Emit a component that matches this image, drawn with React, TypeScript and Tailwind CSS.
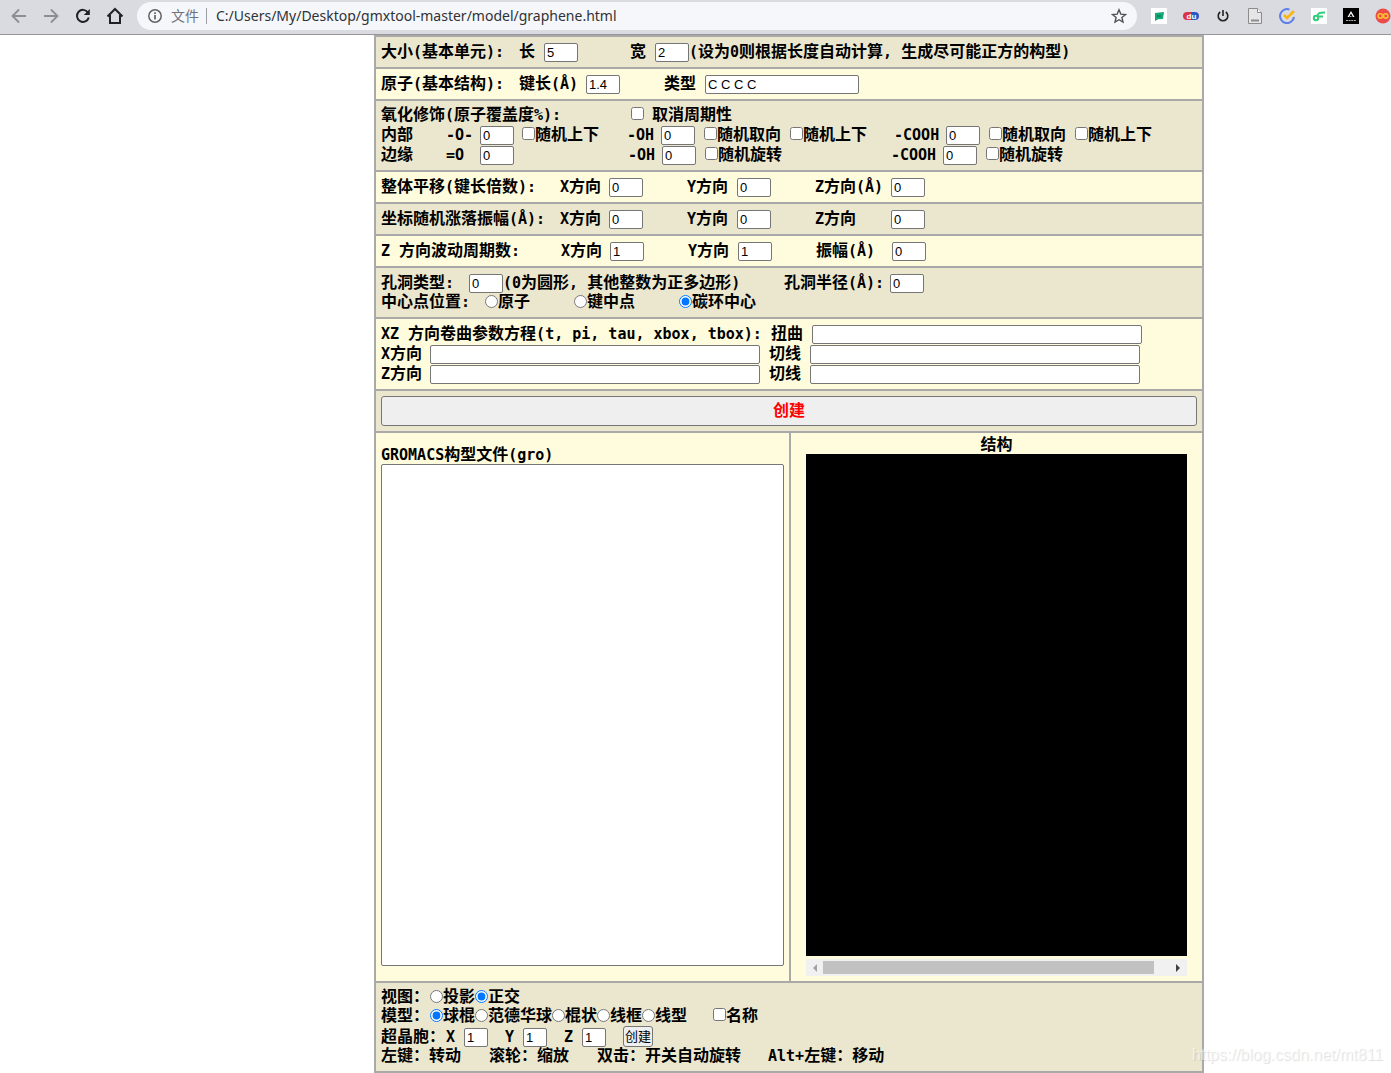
import React from "react";

// latin runs are set a little smaller than the chinese around them
function Txt({ children, className = "" }: { children: string; className?: string }) {
  return (
    <span className={`block whitespace-pre shrink-0 ${className}`}>
      {children.split(/([\x20-\x7eÅ]+)/).map((part, i) =>
        i % 2 ? <span key={i} className="text-[15px] leading-none">{part}</span> : part
      )}
    </span>
  );
}

function Field({ label, value = "", className = "w-[34px]", labelClass = "" }: {
  label: string; value?: string; className?: string; labelClass?: string;
}) {
  return (
    <label className="flex items-end shrink-0">
      <Txt className={labelClass}>{label}</Txt>
      <input
        type="text"
        defaultValue={value}
        className={`h-[19px] shrink-0 border border-[#767676] rounded-[2px] bg-white px-[2px] pb-px text-[13px] leading-4 font-normal font-['Liberation_Sans',sans-serif] ${className}`}
      />
    </label>
  );
}

function Check({ label, className = "", labelClass = "" }: { label: string; className?: string; labelClass?: string }) {
  return (
    <label className={`flex items-center shrink-0 ${className}`}>
      <input type="checkbox" className="w-[13px] h-[13px] mb-[3px]" />
      <Txt className={labelClass}>{label}</Txt>
    </label>
  );
}

function Radio({ name, label, checked = false, className = "" }: {
  name: string; label: string; checked?: boolean; className?: string;
}) {
  return (
    <label className={`flex items-center shrink-0 ${className}`}>
      <input type="radio" name={name} defaultChecked={checked} className="w-[13px] h-[13px] mb-[2px]" />
      <Txt>{label}</Txt>
    </label>
  );
}

function Row({ children, dark = false }: { children: React.ReactNode; dark?: boolean }) {
  return <div className={`p-[5px] ${dark ? "bg-[#ebe7ce]" : "bg-[#fffbdd]"}`}>{children}</div>;
}

function Line({ children, className = "h-5" }: { children: React.ReactNode; className?: string }) {
  return <div className={`flex items-end ${className}`}>{children}</div>;
}

function Toolbar() {
  return (
    <header className="flex items-center h-[35px] pb-[3px] pl-[11px] bg-[#dadbe0] border-b border-[#96969a] overflow-hidden">
      <button aria-label="后退">
        <svg width="16" height="16" viewBox="0 0 16 16" fill="none" stroke="#8d8e92" strokeWidth="1.8">
          <path d="M15 8H2M8 1.500 1.500 8 8 14.500" />
        </svg>
      </button>
      <button aria-label="前进" className="ml-4">
        <svg width="16" height="16" viewBox="0 0 16 16" fill="none" stroke="#8d8e92" strokeWidth="1.8">
          <path d="M1 8h13M8 1.500 14.500 8 8 14.500" />
        </svg>
      </button>
      <button aria-label="刷新" className="ml-4">
        <svg width="16" height="16" viewBox="0 0 16 16" fill="none" stroke="#202124" strokeWidth="2">
          <path d="M13 4.5A6 6 0 1 0 13.8 9.5" />
          <path d="M14.8 1v6h-6z" fill="#202124" stroke="none" />
        </svg>
      </button>
      <button aria-label="主页" className="ml-[15px]">
        <svg width="18" height="18" viewBox="0 0 18 18" fill="none" stroke="#202124" strokeWidth="2">
          <path d="M1.500 9.500 9 2l7.500 7.500M4 8v8h10V8" />
        </svg>
      </button>
      <div className="flex items-center flex-1 max-w-[1000px] min-w-0 h-7 ml-[13px] rounded-full bg-[#f5f7fa] pl-[11px] pr-[10px] font-['Noto_Sans','Noto_Sans_CJK_SC',sans-serif]">
        <svg width="14" height="14" viewBox="0 0 14 14" fill="none" stroke="#5f6368">
          <circle cx="7" cy="7" r="6.2" strokeWidth="1.5" />
          <path d="M7 6v4.5M7 3.3v1.6" strokeWidth="1.7" />
        </svg>
        <span className="ml-[9px] text-[14px] text-[#70747a]">文件</span>
        <span className="w-px h-4 ml-[7px] mr-[9px] bg-[#9a9da1]" />
        <input
          aria-label="地址"
          className="flex-1 min-w-0 bg-transparent text-[14px] text-[#303236]"
          defaultValue="C:/Users/My/Desktop/gmxtool-master/model/graphene.html"
        />
        <svg width="16" height="16" viewBox="0 0 16 16" fill="none" stroke="#505357" strokeWidth="1.4">
          <path d="m8 1.8 1.8 4.3 4.7.4-3.6 3 1.1 4.6L8 11.7l-4 2.4 1.1-4.6-3.6-3 4.7-.4z" />
        </svg>
      </div>
      <div className="flex items-center gap-4 ml-[14px] shrink-0">
        <svg width="16" height="16" viewBox="0 0 16 16">
          <path fill="#fff" d="M0 0h16v16H0z" />
          <path fill="#12a873" d="m4 5 9-1-1 7-5 .3L4 13z" />
          <path d="M6 8h4" stroke="#0b6b52" />
        </svg>
        <svg width="16" height="16" viewBox="0 0 16 16">
          <path fill="#d8344c" d="M8 4H4a4 4 0 0 0 0 8h4z" />
          <path fill="#2b59c3" d="M8 4h4a4 4 0 0 1 0 8H8z" />
          <text x="3.5" y="10.5" fontSize="8" fontWeight="bold" fill="#fff" fontFamily="Liberation Sans">du</text>
        </svg>
        <svg width="16" height="16" viewBox="0 0 16 16" fill="none" stroke="#222" strokeWidth="1.6">
          <path d="M5.2 4a4.800 4.800 0 1 0 5.6 0M8 2v6" />
        </svg>
        <svg width="16" height="16" viewBox="0 0 16 16" stroke="#8c8c8c">
          <path fill="#e6e6e6" d="M1.5.5h9l4 4v11h-13z" />
          <path fill="#fff" d="M10.500.5v4h4" />
          <path d="M4 12.500h8" strokeWidth="2" />
        </svg>
        <svg width="16" height="16" viewBox="0 0 16 16" fill="none">
          <path d="M10.500 1.500A7 7 0 1 0 15 9" stroke="#5d80e8" strokeWidth="2" />
          <path d="m5 7 3 3 7-7" stroke="#f9b517" strokeWidth="2.600" />
        </svg>
        <svg width="16" height="16" viewBox="0 0 16 16" fill="none" stroke="#2fce78" strokeWidth="2">
          <path fill="#fff" stroke="none" d="M0 0h16v16H0z" />
          <circle cx="5" cy="10" r="2.200" />
          <path d="M6.500 8.500C7 5 8 4.500 14 4.500M8 8.500h4" />
        </svg>
        <svg width="16" height="16" viewBox="0 0 16 16">
          <path d="M0 0h16v16H0z" />
          <path d="m8 3 3.500 6H10L8 5.500 6 9H4.500z" fill="#fff" />
          <path d="M6.500 8.500h3M3 12.500h10" stroke="#aaa" strokeDasharray="2 .6" />
        </svg>
        <svg width="16" height="16" viewBox="0 0 16 16">
          <circle cx="8" cy="8" r="7.500" fill="#ee4b4b" />
          <g fill="none" stroke="#ffc12e" strokeWidth="1.600">
            <circle cx="5.300" cy="8" r="2.200" />
            <circle cx="10.700" cy="8" r="2.200" />
          </g>
        </svg>
      </div>
    </header>
  );
}

const directions = [
  { title: "整体平移(键长倍数):", third: "Z方向(Å)", value: "0", titleClass: "w-[179px]" },
  { title: "坐标随机涨落振幅(Å):", third: "Z方向", value: "0", dark: true, titleClass: "w-[179px]" },
  { title: "Z 方向波动周期数:", third: "振幅(Å)", value: "1", titleClass: "w-[180px]" },
];

export default function App() {
  return (
    <div className="relative bg-white text-black">
      <Toolbar />
      <main className="ml-[374px] mr-[187px] min-w-[830px] border-2 border-[#a9a9a9] divide-y-2 divide-[#a9a9a9] text-[16px] leading-5 font-bold font-['DejaVu_Sans_Mono','Noto_Sans_CJK_SC',monospace]">
        <Row dark>
          <Line>
            <Txt className="w-[138px]">大小(基本单元):</Txt>
            <Field label="长" value="5" labelClass="w-[25px]" />
            <div className="w-[52px]" />
            <Field label="宽" value="2" labelClass="w-[25px]" />
            <Txt>(设为0则根据长度自动计算, 生成尽可能正方的构型)</Txt>
          </Line>
        </Row>
        <Row>
          <Line>
            <Txt className="w-[138px]">原子(基本结构):</Txt>
            <Field label="键长(Å)" value="1.4" labelClass="w-[67px]" />
            <div className="w-11" />
            <Field label="类型" value="C C C C" labelClass="w-[41px]" className="w-[154px]" />
          </Line>
        </Row>
        <Row dark>
          <Line className="h-[19px]">
            <Txt className="w-[250px]">氧化修饰(原子覆盖度%):</Txt>
            <Check label="取消周期性" labelClass="ml-2" />
          </Line>
          <Line>
            <Txt className="w-[65px]">内部</Txt>
            <Field label="-O-" value="0" labelClass="w-[34px]" />
            <Check label="随机上下" className="ml-2 w-[105px]" />
            <Field label="-OH" value="0" labelClass="w-[34px]" />
            <Check label="随机取向" className="ml-[9px]" />
            <Check label="随机上下" className="ml-[9px] w-[104px]" />
            <Field label="-COOH" value="0" labelClass="w-[52px]" />
            <Check label="随机取向" className="ml-[9px]" />
            <Check label="随机上下" className="ml-[9px]" />
          </Line>
          <Line>
            <Txt className="w-[65px]">边缘</Txt>
            <Field label="=O" value="0" labelClass="w-[34px]" />
            <div className="w-[114px]" />
            <Field label="-OH" value="0" labelClass="w-[34px]" />
            <Check label="随机旋转" className="ml-[9px] w-[186px]" />
            <Field label="-COOH" value="0" labelClass="w-[52px]" />
            <Check label="随机旋转" className="ml-[9px]" />
          </Line>
        </Row>
        {directions.map((d) => (
          <Row key={d.title} dark={d.dark}>
            <Line>
              <Txt className={d.titleClass}>{d.title}</Txt>
              <Field label="X方向" value={d.value} labelClass="w-[49px]" />
              <div className="w-11" />
              <Field label="Y方向" value={d.value} labelClass="w-[50px]" />
              <div className="w-11" />
              <Field label={d.third} value="0" labelClass="w-[76px]" />
            </Line>
          </Row>
        ))}
        <Row dark>
          <Line>
            <Field label="孔洞类型:" value="0" labelClass="w-[88px]" />
            <Txt className="w-[281px]">(0为圆形, 其他整数为正多边形)</Txt>
            <Field label="孔洞半径(Å):" value="0" labelClass="w-[106px]" />
          </Line>
          <Line className="h-[19px]">
            <Txt className="w-[104px]">中心点位置:</Txt>
            <Radio name="center" label="原子" className="w-[89px]" />
            <Radio name="center" label="键中点" className="w-[105px]" />
            <Radio name="center" label="碳环中心" checked />
          </Line>
        </Row>
        <Row>
          <Line>
            <Txt className="w-[390px]">XZ 方向卷曲参数方程(t, pi, tau, xbox, tbox):</Txt>
            <Field label="扭曲" labelClass="w-[41px]" className="w-[330px]" />
          </Line>
          {["X方向", "Z方向"].map((label) => (
            <Line key={label}>
              <Field label={label} labelClass="w-[49px]" className="w-[330px]" />
              <div className="w-[9px]" />
              <Field label="切线" labelClass="w-[41px]" className="w-[330px]" />
            </Line>
          ))}
        </Row>
        <Row dark>
          <button className="block w-full h-[30px] border border-[#767676] rounded-[3px] bg-[#efefef] text-[#f00]">创建</button>
        </Row>
        <div className="grid grid-cols-2 bg-[#fffbdd]">
          <div className="px-[5px] pt-[13px]">
            <label htmlFor="gro" className="block h-[18px] leading-[18px]"><Txt>GROMACS构型文件(gro)</Txt></label>
            <textarea id="gro" className="block w-full h-[502px] border border-[#767676] rounded-[2px] bg-white resize-none" />
          </div>
          <div className="px-[15px] pt-[3px] pb-[5px] border-l-2 border-[#a9a9a9]">
            <p className="h-[18px] leading-[18px] text-center">结构</p>
            <div className="h-[502px] bg-black" />
            <div className="flex items-center justify-between h-[17px] mt-[3px] px-[6px] bg-[#f1f1f1]">
              <svg width="5" height="8" viewBox="0 0 5 8" fill="#a3a3a3"><path d="M5 0v8L1 4z" /></svg>
              <div className="flex-1 h-[13px] ml-[6px] mr-[22px] bg-[#c1c1c1]" />
              <svg width="5" height="8" viewBox="0 0 5 8" fill="#404040"><path d="M0 0v8l4-4z" /></svg>
            </div>
          </div>
        </div>
        <Row dark>
          <Line className="h-[19px]">
            <Txt className="w-[49px]">视图：</Txt>
            <Radio name="view" label="投影" />
            <Radio name="view" label="正交" checked />
          </Line>
          <Line className="h-[19px]">
            <Txt className="w-[49px]">模型：</Txt>
            <Radio name="model" label="球棍" checked />
            <Radio name="model" label="范德华球" />
            <Radio name="model" label="棍状" />
            <Radio name="model" label="线框" />
            <Radio name="model" label="线型" />
            <Check label="名称" className="ml-[26px]" />
          </Line>
          <Line className="h-[21px]">
            <Txt className="w-[65px]">超晶胞：</Txt>
            <div className="flex items-end gap-[17px]">
              <Field label="X" value="1" labelClass="w-[18px]" className="w-6" />
              <Field label="Y" value="1" labelClass="w-[18px]" className="w-6" />
              <Field label="Z" value="1" labelClass="w-[18px]" className="w-6" />
              <button className="w-[30px] h-[21px] border border-[#767676] rounded-[3px] bg-[#efefef] text-[13px] leading-4 font-normal">创建</button>
            </div>
          </Line>
          <Line className="h-[19px]">
            <Txt className="w-[108px]">左键：转动</Txt>
            <Txt className="w-[108px]">滚轮：缩放</Txt>
            <Txt className="w-[171px]">双击：开关自动旋转</Txt>
            <Txt>Alt+左键：移动</Txt>
          </Line>
        </Row>
      </main>
      <span className="absolute right-2 bottom-2 text-[16px] leading-5 text-white/60 [text-shadow:1px_1px_1px_#0002] font-['Liberation_Sans',sans-serif]">
        https://blog.csdn.net/mt811
      </span>
    </div>
  );
}
